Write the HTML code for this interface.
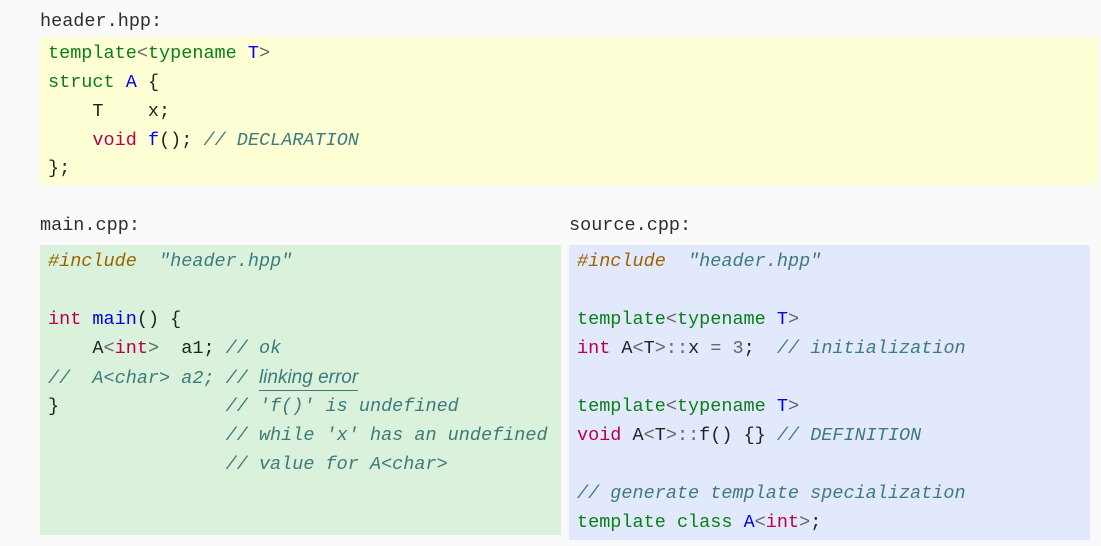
<!DOCTYPE html>
<html><head><meta charset="utf-8"><style>
body{margin:0;background:#fafafa;width:1101px;height:546px;position:relative;overflow:hidden;font-family:"Liberation Mono","DejaVu Sans Mono",monospace;font-size:18.5px;color:#222;}
.box{position:absolute}
.l{position:absolute;white-space:pre;line-height:22px}
.lab{position:absolute;white-space:pre;color:#2a2f33}
.k{color:#0a7f18}.t{color:#b8004a}.b{color:#0000f0}.o{color:#666}
.c{color:#3e7b7b;font-style:italic}.p{color:#9a6400;font-style:italic}.s{color:#3e7b7b;font-style:italic}
.lnk{font-family:"Liberation Sans",sans-serif;font-style:italic;color:#3e7b7b;border-bottom:1.5px solid #3e7b7b;padding-bottom:2px;font-size:19px}
</style></head><body>
<div class="lab" style="left:40px;top:11px">header.hpp:</div>
<div class="box" style="left:40px;top:37px;width:1058px;height:148px;background:#ffffd6"></div>
<div class="l" style="left:48px;top:43px"><span class="k">template</span><span class="o">&lt;</span><span class="k">typename</span> <span class="b">T</span><span class="o">&gt;</span></div>
<div class="l" style="left:48px;top:72px"><span class="k">struct</span> <span class="b">A</span> {</div>
<div class="l" style="left:48px;top:101px">    T    x;</div>
<div class="l" style="left:48px;top:130px">    <span class="t">void</span> <span class="b">f</span>(); <span class="c">// DECLARATION</span></div>
<div class="l" style="left:48px;top:158px">};</div>

<div class="lab" style="left:40px;top:215px">main.cpp:</div>
<div class="lab" style="left:569px;top:215px">source.cpp:</div>
<div class="box" style="left:40px;top:245px;width:521px;height:290px;background:#daf1db"></div>
<div class="box" style="left:569px;top:245px;width:521px;height:295px;background:#e3e9fd"></div>

<div class="l" style="left:48px;top:251px"><span class="p">#include</span>  <span class="s">"header.hpp"</span></div>
<div class="l" style="left:48px;top:309px"><span class="t">int</span> <span class="b">main</span>() {</div>
<div class="l" style="left:48px;top:338px">    A<span class="o">&lt;</span><span class="t">int</span><span class="o">&gt;</span>  a1; <span class="c">// ok</span></div>
<div class="l" style="left:48px;top:367px"><span class="c">//  A&lt;char&gt; a2; // </span><span class="lnk">linking error</span></div>
<div class="l" style="left:48px;top:396px">}               <span class="c">// 'f()' is undefined</span></div>
<div class="l" style="left:48px;top:425px">                <span class="c">// while 'x' has an undefined</span></div>
<div class="l" style="left:48px;top:454px">                <span class="c">// value for A&lt;char&gt;</span></div>

<div class="l" style="left:577px;top:251px"><span class="p">#include</span>  <span class="s">"header.hpp"</span></div>
<div class="l" style="left:577px;top:309px"><span class="k">template</span><span class="o">&lt;</span><span class="k">typename</span> <span class="b">T</span><span class="o">&gt;</span></div>
<div class="l" style="left:577px;top:338px"><span class="t">int</span> A<span class="o">&lt;</span>T<span class="o">&gt;::</span>x <span class="o">=</span> <span class="o">3</span>;  <span class="c">// initialization</span></div>
<div class="l" style="left:577px;top:396px"><span class="k">template</span><span class="o">&lt;</span><span class="k">typename</span> <span class="b">T</span><span class="o">&gt;</span></div>
<div class="l" style="left:577px;top:425px"><span class="t">void</span> A<span class="o">&lt;</span>T<span class="o">&gt;::</span>f() {} <span class="c">// DEFINITION</span></div>
<div class="l" style="left:577px;top:483px"><span class="c">// generate template specialization</span></div>
<div class="l" style="left:577px;top:512px"><span class="k">template</span> <span class="k">class</span> <span class="b">A</span><span class="o">&lt;</span><span class="t">int</span><span class="o">&gt;</span>;</div>
</body></html>
